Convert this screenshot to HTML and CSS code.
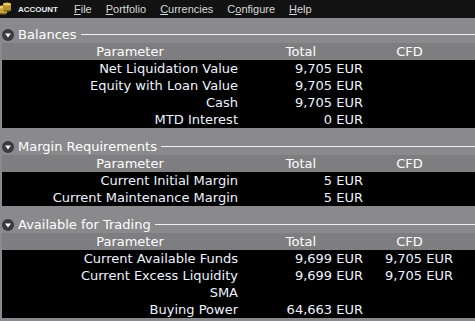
FILE: index.html
```html
<!DOCTYPE html>
<html lang="en">
<head>
  <meta charset="UTF-8" />
  <title>Account</title>
  <link rel="stylesheet" href="styles.css">
</head>
<body>
  <header class="menubar">
    <svg class="logo" width="12" height="14" viewBox="0 0 12 14">
      <ellipse cx="4" cy="12" rx="4" ry="1.6" fill="#8a6a1c"/>
      <rect x="0" y="6" width="8" height="6" fill="#c9a43c"/>
      <ellipse cx="4" cy="6" rx="4" ry="1.6" fill="#f0d070"/>
      <ellipse cx="8" cy="9" rx="4" ry="1.6" fill="#8a6a1c"/>
      <rect x="4" y="3" width="8" height="6" fill="#b8902c"/>
      <ellipse cx="8" cy="3" rx="4" ry="1.6" fill="#e8c860"/>
    </svg>
    <span class="brand">ACCOUNT</span>
    <nav>
      <span><u>F</u>ile</span>
      <span><u>P</u>ortfolio</span>
      <span><u>C</u>urrencies</span>
      <span>C<u>o</u>nfigure</span>
      <span><u>H</u>elp</span>
    </nav>
  </header>

  <section class="group first">
    <div class="group-title">
      <svg class="toggle" width="12" height="12" viewBox="0 0 12 12"><circle cx="6" cy="6" r="6" fill="#3a3a3c"/><path d="M3 4.5h6L6 8.5z" fill="#fff"/></svg>
      <span>Balances</span>
      <span class="rule"></span>
    </div>
    <div class="table">
      <div class="head">
        <span class="c1">Parameter</span><span class="c2">Total</span><span class="c3">CFD</span><span></span>
      </div>
      <div class="row"><span class="c1">Net Liquidation Value</span><span class="c2">9,705 EUR</span><span class="c3"></span><span></span></div>
      <div class="row"><span class="c1">Equity with Loan Value</span><span class="c2">9,705 EUR</span><span class="c3"></span><span></span></div>
      <div class="row"><span class="c1">Cash</span><span class="c2">9,705 EUR</span><span class="c3"></span><span></span></div>
      <div class="row"><span class="c1">MTD Interest</span><span class="c2">0 EUR</span><span class="c3"></span><span></span></div>
    </div>
  </section>

  <section class="group">
    <div class="group-title">
      <svg class="toggle" width="12" height="12" viewBox="0 0 12 12"><circle cx="6" cy="6" r="6" fill="#3a3a3c"/><path d="M3 4.5h6L6 8.5z" fill="#fff"/></svg>
      <span>Margin Requirements</span>
      <span class="rule"></span>
    </div>
    <div class="table">
      <div class="head">
        <span class="c1">Parameter</span><span class="c2">Total</span><span class="c3">CFD</span><span></span>
      </div>
      <div class="row"><span class="c1">Current Initial Margin</span><span class="c2">5 EUR</span><span class="c3"></span><span></span></div>
      <div class="row"><span class="c1">Current Maintenance Margin</span><span class="c2">5 EUR</span><span class="c3"></span><span></span></div>
    </div>
  </section>

  <section class="group">
    <div class="group-title">
      <svg class="toggle" width="12" height="12" viewBox="0 0 12 12"><circle cx="6" cy="6" r="6" fill="#3a3a3c"/><path d="M3 4.5h6L6 8.5z" fill="#fff"/></svg>
      <span>Available for Trading</span>
      <span class="rule"></span>
    </div>
    <div class="table">
      <div class="head">
        <span class="c1">Parameter</span><span class="c2">Total</span><span class="c3">CFD</span><span></span>
      </div>
      <div class="row"><span class="c1">Current Available Funds</span><span class="c2">9,699 EUR</span><span class="c3">9,705 EUR</span><span></span></div>
      <div class="row"><span class="c1">Current Excess Liquidity</span><span class="c2">9,699 EUR</span><span class="c3">9,705 EUR</span><span></span></div>
      <div class="row"><span class="c1">SMA</span><span class="c2"></span><span class="c3"></span><span></span></div>
      <div class="row"><span class="c1">Buying Power</span><span class="c2">64,663 EUR</span><span class="c3"></span><span></span></div>
    </div>
  </section>
</body>
</html>
```

FILE: styles.css
```css
* {
  margin: 0;
  padding: 0;
  box-sizing: border-box;
}
body {
  background: #8a8a8c;
  font-family: 'DejaVu Sans', sans-serif;
  font-size: 13px;
  color: #fff;
  overflow: hidden;
}
.menubar {
  height: 18px;
  background: #121212;
  display: flex;
  align-items: center;
}
.logo {
  margin-left: -1px;
  margin-top: -2px;
}
.brand {
  font-family: 'Liberation Sans', sans-serif;
  font-weight: bold;
  font-size: 8px;
  margin-left: 7px;
  color: #e8ecf4;
}
nav {
  display: flex;
  margin-left: 16px;
  font-family: 'Liberation Sans', sans-serif;
  font-size: 11px;
  color: #d8d8d8;
}
nav span {
  margin-right: 14px;
}
.group {
  margin-top: 11px;
  margin-left: 2px;
}
.group.first {
  margin-top: 9px;
}
.group-title {
  height: 16px;
  line-height: 16px;
  display: flex;
  align-items: center;
}
.toggle {
  margin-right: 4px;
  flex-shrink: 0;
}
.rule {
  flex: 1;
  height: 1px;
  background: #f2f2f2;
  margin-left: 4px;
  margin-top: -1px;
}
.table .head,
.table .row {
  display: grid;
  grid-template-columns: 240px 125px 91px 1fr;
}
.head {
  height: 17px;
  line-height: 17px;
  background: #7e7e80;
  text-align: center;
}
.head .c1 {
  padding-left: 16px;
}
.head .c2 {
  padding-right: 7px;
}
.head .c3 {
  padding-right: 6px;
}
.row {
  height: 17px;
  line-height: 16px;
  padding-top: 1px;
  background: #000;
  color: #eef3ff;
  text-align: right;
  white-space: nowrap;
}
.row .c1,
.row .c2 {
  padding-right: 4px;
}
.row .c3 {
  padding-right: 5px;
}
```
